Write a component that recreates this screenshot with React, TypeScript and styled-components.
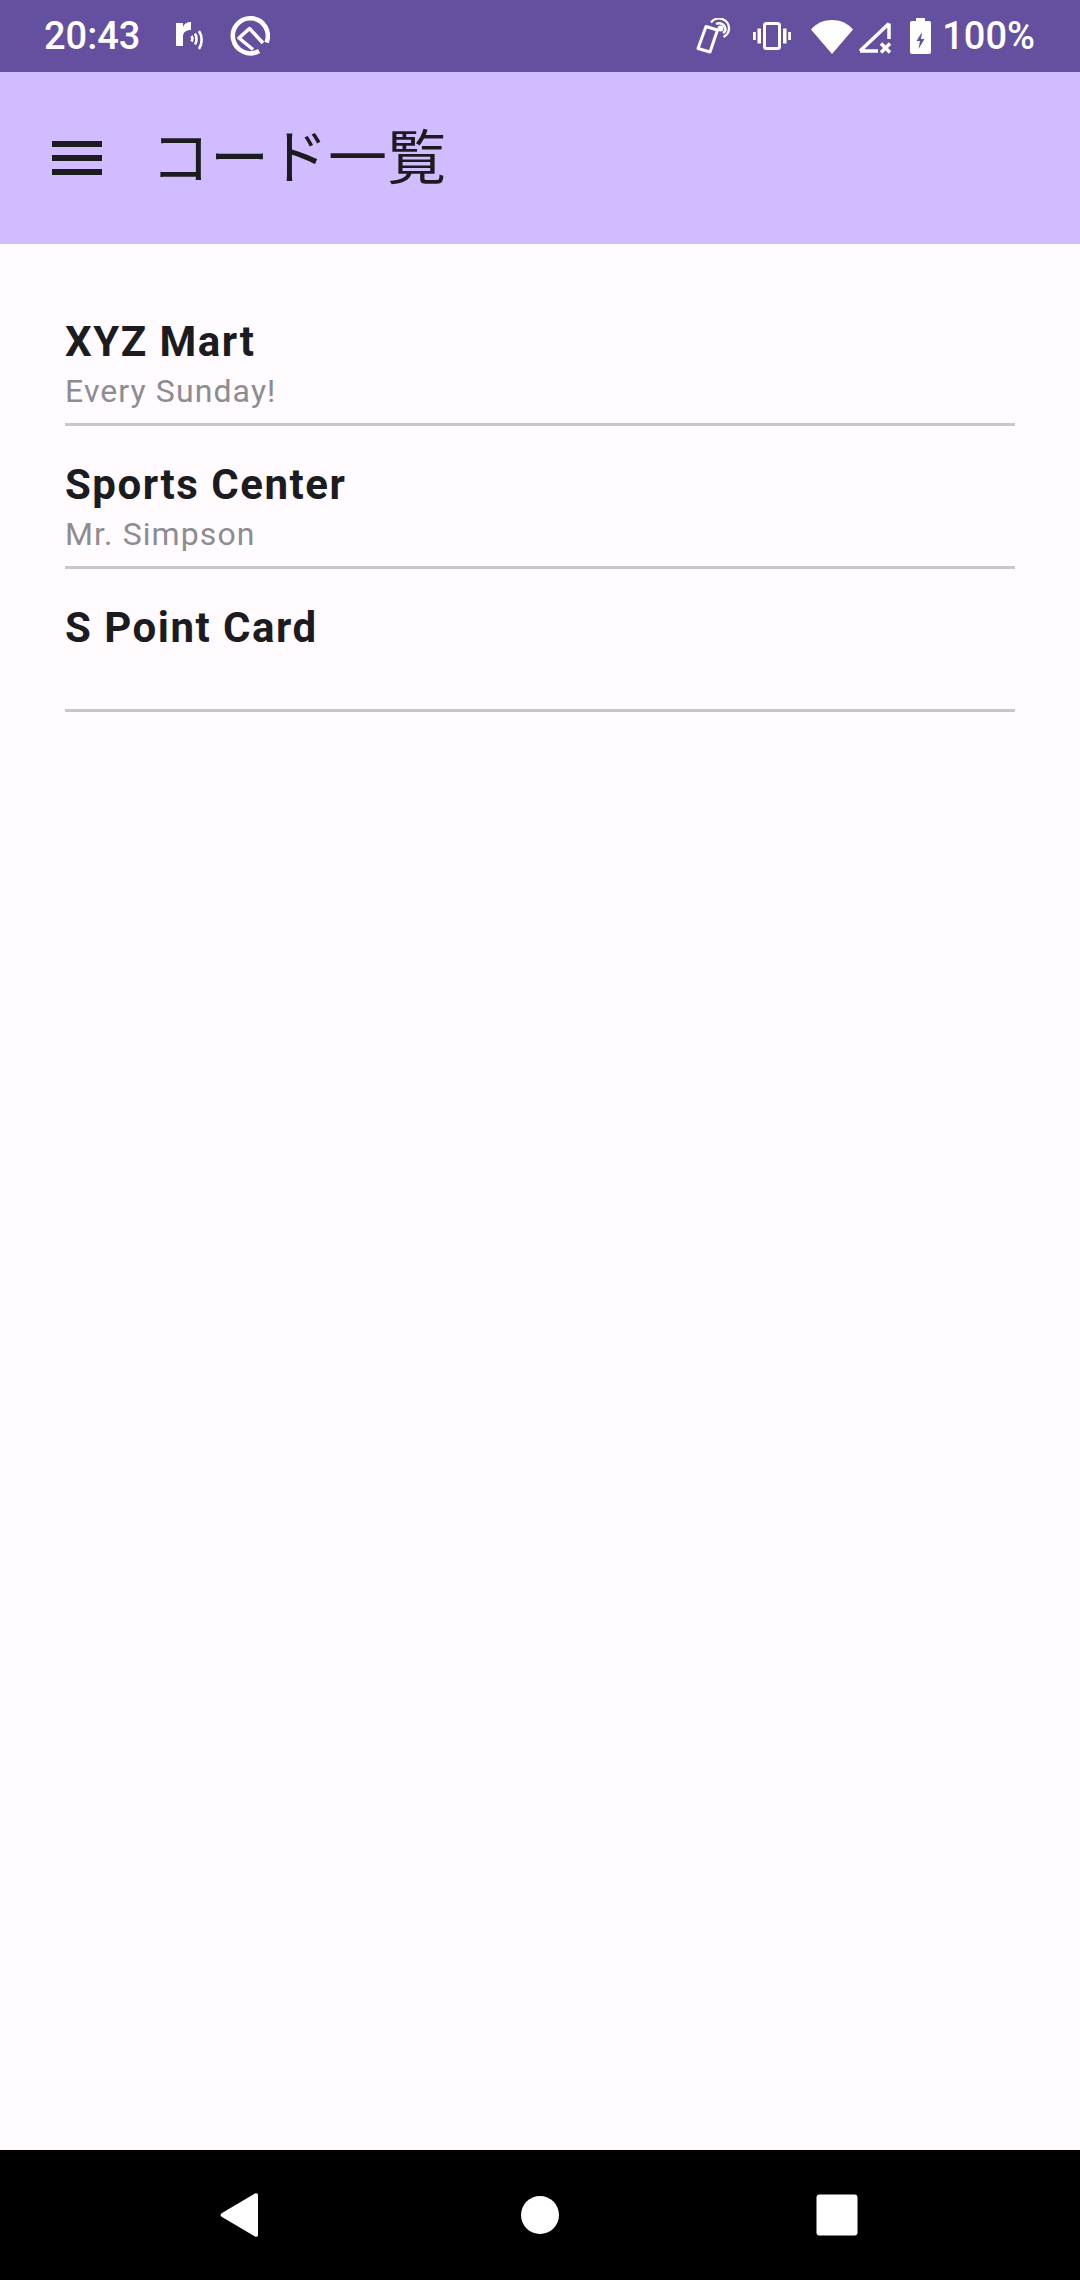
import styled, { createGlobalStyle } from "styled-components";

const GlobalStyle = createGlobalStyle`
  html, body {
    margin: 0;
    padding: 0;
    background: #fffbfe;
  }
  * {
    box-sizing: border-box;
  }
`;

const Screen = styled.div`
  width: 1080px;
  height: 2280px;
  display: flex;
  flex-direction: column;
  overflow: hidden;
  background: #fffbfe;
  font-family: Roboto, "Noto Sans CJK JP", sans-serif;
`;

const StatusBar = styled.div`
  height: 72px;
  flex: none;
  display: flex;
  align-items: center;
  justify-content: space-between;
  padding: 0 45px 0 44px;
  background: #65509f;
  color: #ffffff;
`;

const StatusGroup = styled.div`
  display: flex;
  align-items: center;
`;

const StatusText = styled.span<{ $left?: number }>`
  margin-left: ${({ $left }) => $left ?? 0}px;
  font-size: 38px;
  line-height: 72px;
  font-weight: 500;
`;

const StatusIcon = styled.svg<{ $left: number }>`
  display: block;
  flex: none;
  margin-left: ${({ $left }) => $left}px;
  color: #ffffff;
`;

const AppBar = styled.header`
  height: 172px;
  flex: none;
  display: flex;
  align-items: center;
  padding-left: 52px;
  background: #d0bcff;
  color: #1c1b1f;
`;

const MenuIcon = styled.svg`
  display: block;
  flex: none;
  width: 50px;
  height: 34px;
`;

const Title = styled.h1`
  margin: 0 0 8px 49px;
  font-family: "Noto Sans CJK JP", sans-serif;
  font-size: 59px;
  line-height: 80px;
  font-weight: 400;
  color: #1c1b1f;
`;

const CardList = styled.main`
  flex: 1;
  padding: 39px 65px 0;
`;

const CardRow = styled.div`
  height: 143px;
  padding-top: 34px;
  border-bottom: 3px solid #c9c5ca;
`;

const CardName = styled.div`
  font-size: 42px;
  line-height: 50px;
  font-weight: 700;
  letter-spacing: 1.5px;
  color: #1c1b1f;
`;

const CardNote = styled.div`
  margin-top: 5px;
  font-size: 32px;
  line-height: 38px;
  letter-spacing: 1.1px;
  color: #8e8c90;
`;

const NavBar = styled.nav`
  height: 130px;
  flex: none;
  display: flex;
  align-items: center;
  justify-content: center;
  gap: 236px;
  background: #000000;
`;

const NavIcon = styled.svg`
  display: block;
  flex: none;
  width: 62px;
  height: 62px;
  fill: #ffffff;
`;

const cards = [
  { name: "XYZ Mart", note: "Every Sunday!" },
  { name: "Sports Center", note: "Mr. Simpson" },
  { name: "S Point Card", note: "" },
];

const App = () => {
  return (
    <>
      <GlobalStyle />
      <Screen>
        <StatusBar>
          <StatusGroup>
            <StatusText>20:43</StatusText>
            {/* r logo with sound waves */}
            <StatusIcon $left={36} width="28" height="28" viewBox="0 0 28 28">
              <path
                fill="currentColor"
                d="M0 1h7v4c1-3 4-5 8-5v8c-5 0-8 2-8 7v9H0Z"
              />
              <g fill="none" stroke="currentColor" strokeWidth="2.600">
                <path d="M15.500 14c1 1.500 1 4 0 5.500" />
                <path d="M19 11.500c2 3 2 8 0 11" />
                <path d="M23 9c3.500 5 3.500 13 0 18" />
              </g>
            </StatusIcon>
            {/* Android Q logo */}
            <StatusIcon $left={26} width="40" height="40" viewBox="0 0 40 40">
              <g fill="none" stroke="currentColor">
                <path d="M36.500 26.500A17.500 17.500 0 1 0 29 35" strokeWidth="4.500" />
                <path d="M33 27 19.500 12.500 9 22 23 33.500" strokeWidth="3.500" strokeLinejoin="round" />
              </g>
            </StatusIcon>
          </StatusGroup>
          <StatusGroup>
            {/* phone with nfc rings */}
            <StatusIcon $left={0} width="37" height="36" viewBox="0 0 37 36">
              <g fill="none" stroke="currentColor">
                <path
                  d="M10 8.500 21.500 12 14 34 2 30.500Z"
                  strokeWidth="3"
                  strokeLinejoin="round"
                />
                <path d="M15 4.500A10 10 0 0 1 33 11 10 10 0 0 1 27.500 19" strokeWidth="2.400" />
                <path d="M20 6A6.500 6.500 0 0 1 29.500 12 6.500 6.500 0 0 1 27 15" strokeWidth="2.400" />
              </g>
              <circle cx="24.500" cy="10.500" r="3" fill="currentColor" />
            </StatusIcon>
            {/* vibrate */}
            <StatusIcon $left={20} width="38" height="28" viewBox="0 0 38 28">
              <rect
                x="11.500"
                y="1.500"
                width="15"
                height="25"
                rx="2"
                fill="none"
                stroke="currentColor"
                strokeWidth="3"
              />
              <path
                fill="currentColor"
                d="M4.500 6.500H8v15H4.500ZM0 10h2.800v8H0ZM30 6.500h3.500v15H30ZM35.200 10H38v8h-2.800Z"
              />
            </StatusIcon>
            {/* wifi */}
            <StatusIcon $left={20} width="42" height="35" viewBox="0 0 42 35">
              <path fill="currentColor" d="M0 10.500C5.500 4 13 1 21 1s15.500 3 21 9.500L21 35Z" />
            </StatusIcon>
            {/* no sim signal */}
            <StatusIcon $left={3} width="36" height="35" viewBox="0 0 36 35">
              <path
                fill="none"
                stroke="currentColor"
                strokeWidth="3.500"
                d="M33 4.500V20M4 32 33 4.500M4 32h18"
              />
              <path
                fill="none"
                stroke="currentColor"
                strokeWidth="3.500"
                d="M25 24.500 34 33.500M34 24.500 25 33.500"
              />
            </StatusIcon>
            {/* battery charging */}
            <StatusIcon $left={18} width="21" height="36" viewBox="0 0 21 36">
              <path
                fill="currentColor"
                fillRule="evenodd"
                d="M6 0h9v3h4a2 2 0 0 1 2 2v29a2 2 0 0 1-2 2H2a2 2 0 0 1-2-2V5a2 2 0 0 1 2-2h4ZM12 14 6.500 23H10L8.500 31l6-10H11Z"
              />
            </StatusIcon>
            <StatusText $left={11}>100%</StatusText>
          </StatusGroup>
        </StatusBar>
        <AppBar>
          <MenuIcon viewBox="0 0 50 34">
            <path fill="#1c1b1f" d="M0 0h50v6H0ZM0 14h50v6H0ZM0 28h50v6H0Z" />
          </MenuIcon>
          <Title>コード一覧</Title>
        </AppBar>
        <CardList>
          {cards.map((card) => (
            <CardRow key={card.name}>
              <CardName>{card.name}</CardName>
              <CardNote>{card.note}</CardNote>
            </CardRow>
          ))}
        </CardList>
        <NavBar>
          <NavIcon viewBox="0 0 62 62">
            <path d="M44 9.500c1.500-.8 3 0 3 1.500v40c0 1.700-1.500 2.300-3 1.500L11 33c-2-1.300-2-2.700 0-4Z" />
          </NavIcon>
          <NavIcon viewBox="0 0 62 62">
            <circle cx="31" cy="31" r="19" />
          </NavIcon>
          <NavIcon viewBox="0 0 62 62">
            <rect x="9.500" y="10.500" width="41" height="41" rx="3" />
          </NavIcon>
        </NavBar>
      </Screen>
    </>
  );
};

export default App;
